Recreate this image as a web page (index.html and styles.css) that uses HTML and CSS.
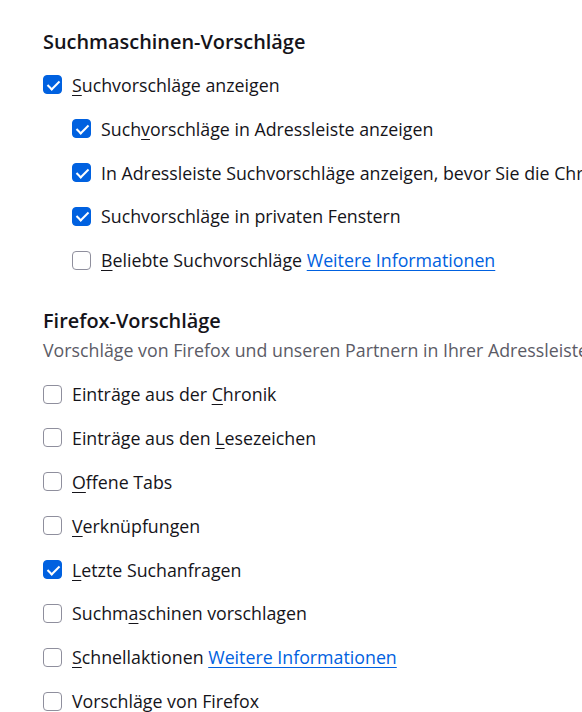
FILE: index.html
```html
<!DOCTYPE html>
<html lang="de">
<head>
<meta charset="utf-8">
<title>Suchmaschinen-Vorschläge</title>
<link rel="stylesheet" href="styles.css">
</head>
<body>
<main class="page">
  <section class="group">
    <h2 class="heading">Suchmaschinen-Vorschläge</h2>
    <div class="rows">
      <label class="row"><span class="box checked"></span><span class="label"><u>S</u>uchvorschläge anzeigen</span></label>
      <label class="row sub"><span class="box checked"></span><span class="label">Such<u>v</u>orschläge in Adressleiste anzeigen</span></label>
      <label class="row sub"><span class="box checked"></span><span class="label">In Adressleiste Suchvorschläge anzeigen, bevor Sie die Chronik durchsuchen</span></label>
      <label class="row sub"><span class="box checked"></span><span class="label">Suchvorschläge in privaten Fenstern</span></label>
      <label class="row sub"><span class="box"></span><span class="label"><u>B</u>eliebte Suchvorschläge <a class="link" href="#">Weitere Informationen</a></span></label>
    </div>
  </section>
  <section class="group second">
    <h2 class="heading">Firefox-Vorschläge</h2>
    <p class="desc">Vorschläge von Firefox und unseren Partnern in Ihrer Adressleiste.</p>
    <div class="rows list">
      <label class="row"><span class="box"></span><span class="label">Einträge aus der <u>C</u>hronik</span></label>
      <label class="row"><span class="box"></span><span class="label">Einträge aus den <u>L</u>esezeichen</span></label>
      <label class="row"><span class="box"></span><span class="label"><u>O</u>ffene Tabs</span></label>
      <label class="row"><span class="box"></span><span class="label"><u>V</u>erknüpfungen</span></label>
      <label class="row"><span class="box checked"></span><span class="label"><u>L</u>etzte Suchanfragen</span></label>
      <label class="row"><span class="box"></span><span class="label">Suchm<u>a</u>schinen vorschlagen</span></label>
      <label class="row"><span class="box"></span><span class="label"><u>S</u>chnellaktionen <a class="link" href="#">Weitere Informationen</a></span></label>
      <label class="row"><span class="box"></span><span class="label">Vorschläge von Firefox</span></label>
    </div>
  </section>
</main>
</body>
</html>
```
FILE: styles.css
```css
html, body {
  margin: 0;
  padding: 0;
  background: #ffffff;
  overflow: hidden;
}
body {
  width: 582px;
  height: 712px;
  font-family: "Open Sans", "Noto Sans", sans-serif;
  color: #15141a;
}
.page {
  padding: 28px 0 0 43px;
}
.heading {
  margin: 0;
  font-size: 19.9px;
  font-weight: 600;
  line-height: 28px;
  height: 28px;
  white-space: nowrap;
}
.rows {
  display: flex;
  flex-direction: column;
  margin-top: 7px;
}
.row {
  display: flex;
  align-items: center;
  height: 43.85px;
  white-space: nowrap;
}
.row.sub {
  padding-left: 29px;
}
.box {
  flex: none;
  width: 17px;
  height: 17px;
  border: 1.5px solid #8f8f9d;
  border-radius: 4px;
  background: #ffffff;
  margin-right: 10px;
  position: relative;
}
.box.checked {
  background: #0061e0;
  border-color: #0061e0;
}
.box.checked::after {
  content: "";
  position: absolute;
  left: 5.5px;
  top: 1.5px;
  width: 5px;
  height: 10px;
  border-right: 2.6px solid #ffffff;
  border-bottom: 2.6px solid #ffffff;
  transform: rotate(45deg);
}
.label {
  font-size: 17.8px;
  line-height: 24px;
}
.label u {
  text-decoration-thickness: 1px;
  text-underline-offset: 3px;
}
.link {
  color: #0061e0;
  text-decoration: underline;
  text-decoration-thickness: 1px;
  text-underline-offset: 3px;
}
.second {
  margin-top: 25px;
}
.desc {
  margin: 3px 0 0;
  font-size: 17.8px;
  line-height: 24px;
  color: #5b5b66;
  white-space: nowrap;
}
.list {
  margin-top: 10px;
}
```
